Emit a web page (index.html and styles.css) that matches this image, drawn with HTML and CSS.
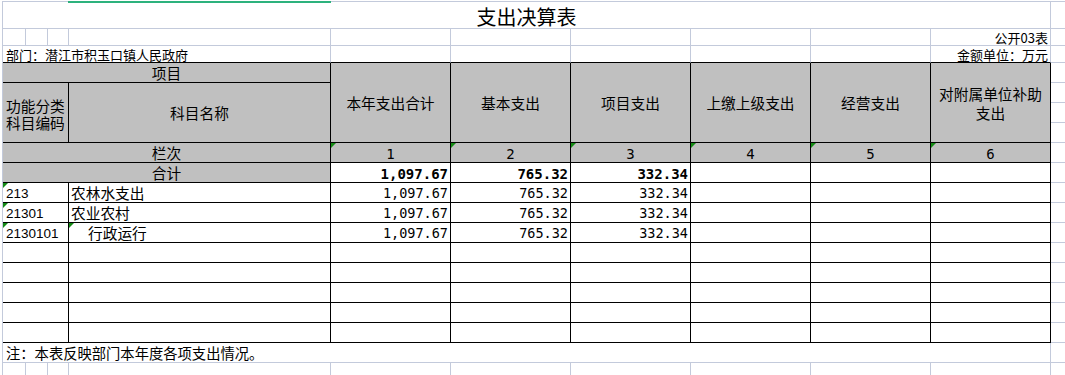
FILE: index.html
```html
<!DOCTYPE html>
<html lang="zh-CN">
<head>
<meta charset="utf-8">
<title>支出决算表</title>
<link rel="stylesheet" href="styles.css">
</head>
<body>
<div class="sheet">
  <div class="c title s10">支出决算表</div>
  <div class="c r"></div>

  <div class="c"></div><div class="c"></div><div class="c"></div><div class="c"></div><div class="c"></div>
  <div class="c"></div><div class="c"></div><div class="c"></div><div class="c"></div>
  <div class="c lbl rt">公开03表</div>
  <div class="c r"></div>

  <div class="c lbl s4 tb">部门：潜江市积玉口镇人民政府</div>
  <div class="c tb"></div><div class="c tb"></div><div class="c tb"></div><div class="c tb"></div><div class="c tb"></div>
  <div class="c lbl rt tb">金额单位：万元</div>
  <div class="c r"></div>

  <div class="c t g ctr s4">项目</div>
  <div class="c t g ctr rs4 hd">本年支出合计</div>
  <div class="c t g ctr rs4 hd">基本支出</div>
  <div class="c t g ctr rs4 hd">项目支出</div>
  <div class="c t g ctr rs4 hd">上缴上级支出</div>
  <div class="c t g ctr rs4 hd">经营支出</div>
  <div class="c t g ctr rs4 hd">对附属单位补助支出</div>
  <div class="c r"></div>

  <div class="c t g s3 rs3 codeh">功能分类<br>科目编码</div>
  <div class="c t g ctr rs3">科目名称</div>
  <div class="c r"></div>
  <div class="c r"></div>
  <div class="c r"></div>

  <div class="c t g ctr s4 low">栏次</div>
  <div class="c t g ctr idx tri">1</div>
  <div class="c t g ctr idx tri">2</div>
  <div class="c t g ctr idx tri">3</div>
  <div class="c t g ctr idx tri">4</div>
  <div class="c t g ctr idx tri">5</div>
  <div class="c t g ctr idx tri">6</div>
  <div class="c r"></div>

  <div class="c t g ctr s4 low">合计</div>
  <div class="c t val sum">1,097.67</div>
  <div class="c t val sum">765.32</div>
  <div class="c t val sum">332.34</div>
  <div class="c t"></div><div class="c t"></div><div class="c t"></div>
  <div class="c r"></div>

  <div class="c t s3 code tri">213</div>
  <div class="c t name">农林水支出</div>
  <div class="c t val">1,097.67</div>
  <div class="c t val">765.32</div>
  <div class="c t val">332.34</div>
  <div class="c t"></div><div class="c t"></div><div class="c t"></div>
  <div class="c r"></div>

  <div class="c t s3 code tri">21301</div>
  <div class="c t name">农业农村</div>
  <div class="c t val">1,097.67</div>
  <div class="c t val">765.32</div>
  <div class="c t val">332.34</div>
  <div class="c t"></div><div class="c t"></div><div class="c t"></div>
  <div class="c r"></div>

  <div class="c t s3 code tri">2130101</div>
  <div class="c t name sub tri">行政运行</div>
  <div class="c t val">1,097.67</div>
  <div class="c t val">765.32</div>
  <div class="c t val">332.34</div>
  <div class="c t"></div><div class="c t"></div><div class="c t"></div>
  <div class="c r"></div>

  <div class="c t s3"></div><div class="c t"></div>
  <div class="c t"></div><div class="c t"></div><div class="c t"></div><div class="c t"></div><div class="c t"></div><div class="c t"></div>
  <div class="c r"></div>

  <div class="c t s3"></div><div class="c t"></div>
  <div class="c t"></div><div class="c t"></div><div class="c t"></div><div class="c t"></div><div class="c t"></div><div class="c t"></div>
  <div class="c r"></div>

  <div class="c t s3"></div><div class="c t"></div>
  <div class="c t"></div><div class="c t"></div><div class="c t"></div><div class="c t"></div><div class="c t"></div><div class="c t"></div>
  <div class="c r"></div>

  <div class="c t s3"></div><div class="c t"></div>
  <div class="c t"></div><div class="c t"></div><div class="c t"></div><div class="c t"></div><div class="c t"></div><div class="c t"></div>
  <div class="c r"></div>

  <div class="c t s3"></div><div class="c t"></div>
  <div class="c t"></div><div class="c t"></div><div class="c t"></div><div class="c t"></div><div class="c t"></div><div class="c t"></div>
  <div class="c r"></div>

  <div class="c note s10">注：本表反映部门本年度各项支出情况。</div>
  <div class="c r"></div>

  <div class="c nb"></div><div class="c nb"></div><div class="c nb"></div><div class="c nb"></div><div class="c nb"></div>
  <div class="c nb"></div><div class="c nb"></div><div class="c nb"></div><div class="c nb"></div><div class="c nb"></div>
  <div class="c nb r"></div>
</div>
</body>
</html>
```

FILE: styles.css
```css
:root {
  --grid: #c3cadb;
  --fill: #c0c0c0;
}

html, body {
  margin: 0;
  padding: 0;
  background: #fff;
  overflow: hidden;
}

body {
  font-family: "Noto Sans CJK SC", sans-serif;
  color: #000;
}

.sheet {
  display: grid;
  grid-template-columns: 23px 22px 21px 262px repeat(6, 120px) 1fr;
  grid-template-rows: 27px 17px 17px repeat(14, 20px) 20px 1fr;
  margin: 1px 0 0 2px;
  border-top: 1px solid var(--grid);
  border-left: 1px solid var(--grid);
  height: 373px;
}

.c {
  box-sizing: border-box;
  position: relative;
  display: flex;
  align-items: center;
  min-width: 0;
  border-right: 1px solid var(--grid);
  border-bottom: 1px solid var(--grid);
  font-size: 14.7px;
  line-height: 1;
  white-space: nowrap;
}

.r { border-right: none; }
.nb { border-bottom: none; }

.s3 { grid-column: span 3; }
.s4 { grid-column: span 4; }
.s10 { grid-column: span 10; }
.rs3 { grid-row: span 3; }
.rs4 { grid-row: span 4; }

.t {
  border-right-color: #000;
  border-bottom-color: #000;
}
.tb { border-bottom-color: #000; }
.g { background: var(--fill); }

.ctr {
  justify-content: center;
  text-align: center;
  padding-top: 1px;
}
.low { padding-top: 2px; }

.title {
  justify-content: center;
  font-size: 20px;
  padding-top: 3px;
}
.title::before {
  content: "";
  position: absolute;
  top: -1px;
  left: 65px;
  width: 263px;
  height: 2px;
  background: #2db27d;
}

.lbl {
  align-items: flex-end;
  font-size: 13px;
  padding: 0 3px 1px 3px;
}
.lbl.rt {
  justify-content: flex-end;
  padding-right: 2px;
  padding-bottom: 1px;
}

.hd {
  white-space: normal;
  line-height: 19px;
  padding: 0 3px;
}

.codeh {
  white-space: normal;
  line-height: 17px;
  padding: 2px 0 0 3px;
}

.idx {
  font-family: "DejaVu Sans Mono", monospace;
  font-size: 14px;
  padding-top: 2px;
}

.val {
  justify-content: flex-end;
  padding: 2px 2px 0 0;
  font-family: "DejaVu Sans Mono", monospace;
  font-size: 13.5px;
}
.sum {
  font-weight: bold;
  font-size: 14px;
}

.code {
  padding: 2px 0 0 3px;
  font-family: "Liberation Sans", sans-serif;
  font-size: 13.5px;
}

.name {
  padding: 2px 0 0 2px;
}
.name.sub { padding-left: 19px; }

.note {
  padding: 2px 0 0 3px;
  font-size: 14.3px;
}

.tri::after {
  content: "";
  position: absolute;
  top: 0;
  left: 0;
  border-top: 5px solid #148a14;
  border-right: 5px solid transparent;
}
```
